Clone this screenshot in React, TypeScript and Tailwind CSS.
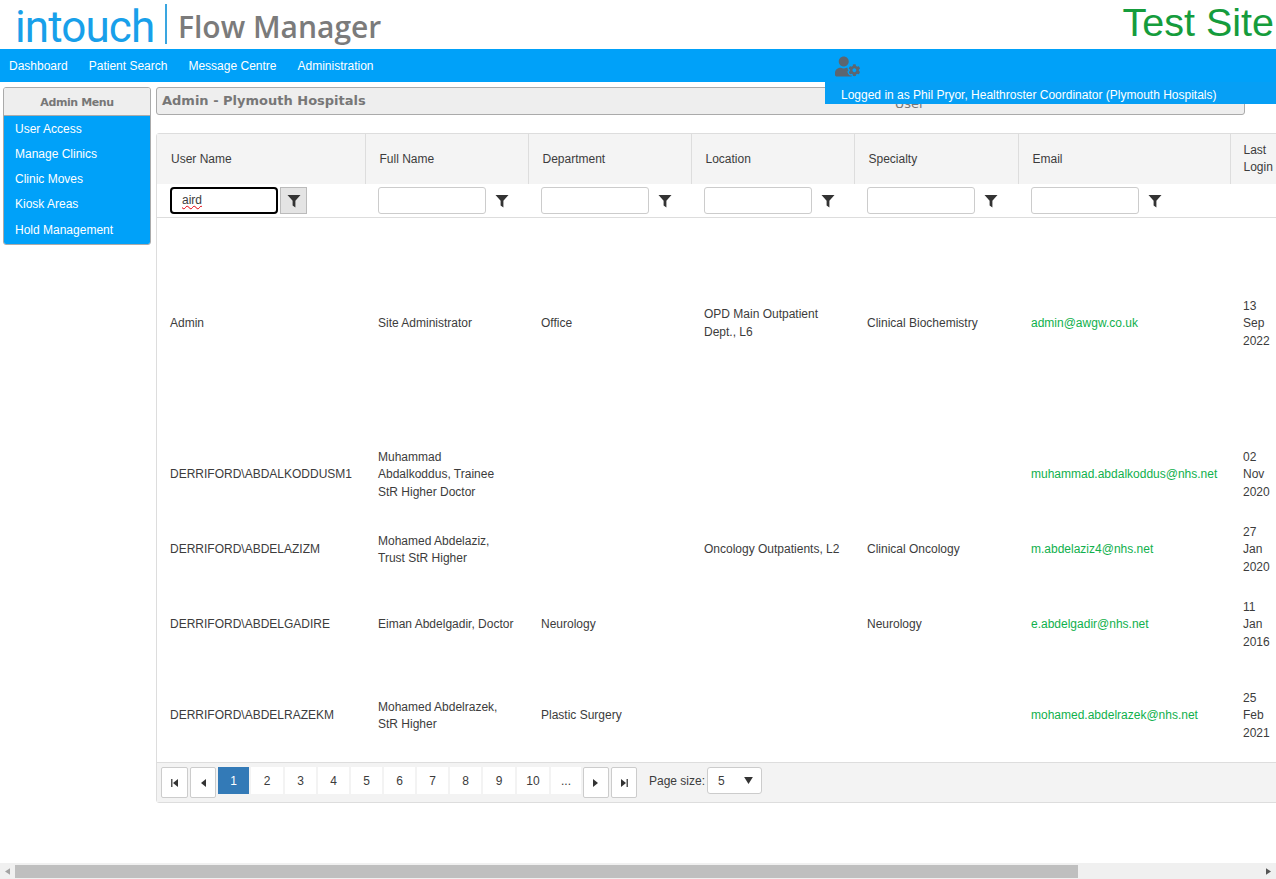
import { FaUserCog } from 'react-icons/fa';

const navItems = ['Dashboard', 'Patient Search', 'Message Centre', 'Administration'];
const menuItems = ['User Access', 'Manage Clinics', 'Clinic Moves', 'Kiosk Areas', 'Hold Management'];
const columns = ['User Name', 'Full Name', 'Department', 'Location', 'Specialty', 'Email'];

const rows = [
  { h: 'h-[213px]', user: 'Admin', name: 'Site Administrator', dept: 'Office', loc: 'OPD Main Outpatient Dept., L6', spec: 'Clinical Biochemistry', email: 'admin@awgw.co.uk', last: '13 Sep 2022' },
  { h: 'h-[90px]', user: 'DERRIFORD\\ABDALKODDUSM1', name: 'Muhammad Abdalkoddus, Trainee StR Higher Doctor', dept: '', loc: '', spec: '', email: 'muhammad.abdalkoddus@nhs.net', last: '02 Nov 2020' },
  { h: 'h-[60px]', user: 'DERRIFORD\\ABDELAZIZM', name: 'Mohamed Abdelaziz, Trust StR Higher', dept: '', loc: 'Oncology Outpatients, L2', spec: 'Clinical Oncology', email: 'm.abdelaziz4@nhs.net', last: '27 Jan 2020' },
  { h: 'h-[90px]', user: 'DERRIFORD\\ABDELGADIRE', name: 'Eiman Abdelgadir, Doctor', dept: 'Neurology', loc: '', spec: 'Neurology', email: 'e.abdelgadir@nhs.net', last: '11 Jan 2016' },
  { h: 'h-[92px]', user: 'DERRIFORD\\ABDELRAZEKM', name: 'Mohamed Abdelrazek, StR Higher', dept: 'Plastic Surgery', loc: '', spec: '', email: 'mohamed.abdelrazek@nhs.net', last: '25 Feb 2021' },
];

function Funnel() {
  return (
    <svg viewBox="0 0 14 14" className="w-[14px] h-[14px] mt-[2px]">
      <path d="M0.5 1h13L8.4 6.8V13.5L5.6 11.5V6.8z" fill="#333" />
    </svg>
  );
}

function FilterCell() {
  return (
    <td className="px-[13px] h-[33px] align-middle">
      <div className="flex items-center">
        <div className="w-[108px] shrink-0 h-[27px] bg-white border border-[#ccc] rounded-[3px]" />
        <div className="w-[29px] shrink-0 h-[27px] ml-[1px] flex items-center justify-center">
          <Funnel />
        </div>
      </div>
    </td>
  );
}

function Tri({ dir, bar }: { dir: 'l' | 'r'; bar?: boolean }) {
  return (
    <svg viewBox="0 0 10 10" className="w-[10px] h-[10px]">
      {dir === 'l' ? <path d="M8 1v8L3 5z" fill="#333" /> : <path d="M2 1v8l5-4z" fill="#333" />}
      {bar && <rect x={dir === 'l' ? 1 : 7.5} y="1" width="1.5" height="8" fill="#555" />}
    </svg>
  );
}

function PagerButton({ dir, bar, w }: { dir: 'l' | 'r'; bar?: boolean; w: string }) {
  return (
    <div className={`${w} h-[31px] bg-white border border-[#ccc] rounded-[2px] flex items-center justify-center`}>
      <Tri dir={dir} bar={bar} />
    </div>
  );
}

export default function App() {
  return (
    <div className="relative h-[879px] w-full overflow-hidden bg-white flex flex-col text-xs text-[#3c3c3c] font-['Liberation_Sans',Arial,sans-serif]">
      {/* Logo and site name */}
      <header className="h-[49px] shrink-0 flex items-start">
        <div className="flex items-center h-[49px] pl-[15px]">
          <span className="w-[150px] shrink-0 pt-[4px] text-[44px] leading-[44px] tracking-[-0.9px] font-normal text-[#18a0ea] font-['Roboto',sans-serif]">intouch</span>
          <div className="w-[2px] h-[40px] bg-[#3aa6e0] mb-[1px]" />
          <span className="ml-[11px] mt-[5px] text-[30px] leading-[40px] font-semibold text-[#7b7b7b] font-['Open_Sans',sans-serif]">Flow Manager</span>
        </div>
        <div className="ml-auto pr-[2px] pt-[2px] text-[39.5px] leading-[41px] text-[#159c3c]">Test Site</div>
      </header>

      {/* Main nav */}
      <nav className="h-[33px] shrink-0 bg-[#00a1f9] flex items-center pl-[9px] gap-[21px] text-white">
        {navItems.map((item) => (
          <span key={item}>{item}</span>
        ))}
      </nav>

      {/* Logged-in panel sits over the page title */}
      <div className="absolute left-[825px] right-0 top-[49px] h-[55px] pointer-events-none">
        <div className="absolute left-[10px] top-[5px] text-[#5c6670]">
          <FaUserCog size={25} />
        </div>
        <div className="absolute inset-x-0 top-[33px] h-[22px] bg-[#069ff5] text-white pl-[16px] pt-[6px] leading-[14px]">
          Logged in as Phil Pryor, Healthroster Coordinator (Plymouth Hospitals)
        </div>
      </div>

      <div className="flex-1 flex items-start pt-[5px] pl-[3px]">
        {/* Side menu */}
        <aside className="w-[148px] shrink-0 border border-[#aaa] rounded-[3px] overflow-hidden">
          <div className="h-[28px] pt-[4px] bg-[#eee] border-b border-[#aaa] flex items-center justify-center font-bold text-[11px] text-[#777] font-['DejaVu_Sans',sans-serif] tracking-[-0.4px]">
            Admin Menu
          </div>
          <ul className="bg-[#00a1f9] text-white pl-[11px] pb-[2px]">
            {menuItems.map((item, i) => (
              <li key={item} className={`${i === 4 ? 'h-[26px] pt-[2px]' : 'h-[25px]'} flex items-center font-medium`}>{item}</li>
            ))}
          </ul>
        </aside>

        <main className="w-[1090px] shrink-0 ml-[5px]">
          {/* Page title */}
          <div className="h-[28px] w-[1089px] bg-[#eee] border border-[#aaa] rounded-[3px] flex items-center pl-[5px] font-['DejaVu_Sans',sans-serif] font-bold text-[13px] text-[#777]">
            <span>Admin - Plymouth Hospitals</span>
            <span className="ml-[529px] mt-[6px] font-normal">User</span>
          </div>

          {/* Users grid */}
          <div className="w-[1340px] mt-[18px] border border-[#ddd] rounded-[3px]">
            <table className="table-fixed w-full border-collapse">
              <colgroup>
                <col className="w-[208px]" />
                <col className="w-[163px]" />
                <col className="w-[163px]" />
                <col className="w-[163px]" />
                <col className="w-[164px]" />
                <col className="w-[212px]" />
                <col className="w-[50px]" />
                <col />
              </colgroup>
              <thead>
                <tr className="h-[50px] bg-[#f4f4f4]">
                  {columns.map((c) => (
                    <th key={c} className="pl-[14px] font-normal text-left border-r border-[#ddd]">{c}</th>
                  ))}
                  <th className="pl-[13px] pr-[4px] font-normal text-left leading-[17.5px] border-r border-[#ddd]">Last Login</th>
                  <th />
                </tr>
                <tr className="border-b border-[#ddd]">
                  <td className="px-[13px] h-[33px] align-middle">
                    <div className="flex items-center">
                      <div className="w-[108px] shrink-0 h-[27px] bg-white border-2 border-black rounded-[4px] pl-[10px] flex items-center">
                        <span className="underline decoration-wavy decoration-red-600 decoration-1">aird</span>
                      </div>
                      <div className="w-[27px] shrink-0 h-[27px] ml-[2px] bg-[#e4e4e4] border border-[#bbb] flex items-center justify-center">
                        <Funnel />
                      </div>
                    </div>
                  </td>
                  <FilterCell />
                  <FilterCell />
                  <FilterCell />
                  <FilterCell />
                  <FilterCell />
                  <td />
                  <td />
                </tr>
              </thead>
              <tbody className="leading-[17.5px]">
                {rows.map((r) => (
                  <tr key={r.user} className={r.h}>
                    <td className="px-[13px] whitespace-nowrap">{r.user}</td>
                    <td className="px-[13px]">{r.name}</td>
                    <td className="px-[13px]">{r.dept}</td>
                    <td className="px-[13px]">{r.loc}</td>
                    <td className="px-[13px]">{r.spec}</td>
                    <td className="px-[13px] text-[#10b04c]">{r.email}</td>
                    <td className="pl-[13px] pr-[4px]">{r.last}</td>
                    <td />
                  </tr>
                ))}
              </tbody>
            </table>

            {/* Pager */}
            <div className="h-[40px] bg-[#f3f3f3] border-t border-[#ddd] flex items-start pt-[4px] pl-[4px]">
              <PagerButton dir="l" bar w="w-[27px]" />
              <div className="ml-[2px]"><PagerButton dir="l" w="w-[26px]" /></div>
              <div className="ml-[2px] flex gap-[2px]">
                {['1', '2', '3', '4', '5', '6', '7', '8', '9', '10', '...'].map((p, i) => (
                  <div
                    key={p}
                    className={`${i === 10 ? 'w-[30px]' : i >= 8 ? 'w-[32px]' : i === 1 ? 'w-[32px]' : 'w-[31px]'} h-[27px] flex items-center justify-center ${i === 0 ? 'bg-[#337ab7] text-white' : 'bg-white'}`}
                  >
                    {p}
                  </div>
                ))}
              </div>
              <div className="ml-[2px]"><PagerButton dir="r" w="w-[26px]" /></div>
              <div className="ml-[2px]"><PagerButton dir="r" bar w="w-[26px]" /></div>
              <span className="ml-[12px] h-[27px] flex items-center">Page size:</span>
              <div className="ml-[2px] w-[55px] h-[27px] bg-white border border-[#ccc] rounded-[3px] flex items-center pl-[10px] pr-[8px] justify-between">
                <span>5</span>
                <svg viewBox="0 0 10 8" className="w-[9px] h-[7px]"><path d="M0 0h10L5 8z" fill="#333" /></svg>
              </div>
            </div>
          </div>
        </main>
      </div>

      {/* Page scrollbar */}
      <div className="absolute bottom-0 inset-x-0 h-[16px] bg-[#f0f0f0] flex items-center">
        <div className="w-[15px] flex justify-center">
          <svg viewBox="0 0 6 8" className="w-[5px] h-[7px]"><path d="M6 0v8L0 4z" fill="#a3a3a3" /></svg>
        </div>
        <div className="w-[1063px] h-[13px] bg-[#bfbfbf]" />
        <div className="ml-auto w-[15px] flex justify-center">
          <svg viewBox="0 0 6 8" className="w-[5px] h-[7px]"><path d="M0 0v8l6-4z" fill="#555" /></svg>
        </div>
      </div>
    </div>
  );
}
